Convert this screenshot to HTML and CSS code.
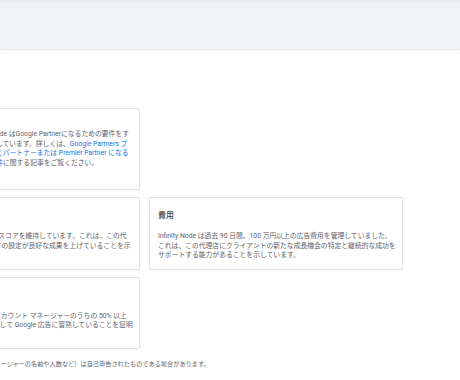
FILE: index.html
```html
<!DOCTYPE html>
<html lang="ja">
<head>
    <meta charset="UTF-8">
    <title>Infinity Node</title>
    <link rel="stylesheet" href="styles.css">
</head>
<body>
<div class="topbar"></div>
<div class="main">
    <div class="cards">
        <div class="card card-badge">
            <div class="badge">
                <svg width="64" height="64" viewBox="0 0 64 64"><circle cx="32" cy="32" r="28" fill="#fff" stroke="#dadce0" stroke-width="2"/></svg>
            </div>
            <p class="desc">Infinity Node はGoogle Partnerになるための要件をす<br>べて満たしています。詳しくは、<a href="#">Google Partners プ<br>ログラムとパートナーまたは Premier Partner になる<br>ための要件</a>に関する記事をご覧ください。</p>
        </div>
        <div class="empty"></div>

        <div class="card">
            <h3 class="title">最適化スコア</h3>
            <p class="desc">Infinity Node は 70% 以上の最適化スコアを維持しています。これは、この代<br>理店の Google 広告運用アカウントの設定が良好な成果を上げていることを示<br>しています。</p>
        </div>
        <div class="card">
            <h3 class="title">費用</h3>
            <p class="desc">Infinity Node は過去 90 日間、100 万円以上の広告費用を管理していました。<br>これは、この代理店にクライアントの新たな成長機会の特定と継続的な成功を<br>サポートする能力があることを示しています。</p>
        </div>

        <div class="card">
            <h3 class="title">認定資格</h3>
            <p class="desc">Infinity Nodeでは、所属しているアカウント マネージャーのうちの 50% 以上<br>が、Google 広告の認定資格を取得して Google 広告に習熟していることを証明<br>しています。</p>
        </div>
        <div class="empty"></div>
    </div>
    <p class="note">※ 代理店に関する情報（アカウント マネージャーの名前や人数など）は自己申告されたものである場合があります。</p>
</div>
</body>
</html>
```

FILE: styles.css
```css
html, body {
    margin: 0;
    padding: 0;
    background: #fff;
    overflow: hidden;
}

body {
    font-family: Roboto, "Noto Sans CJK JP", sans-serif;
    color: #5f6368;
}

.topbar {
    height: 49px;
    background: #f1f3f4;
    border-bottom: 1px solid #e8eaed;
    box-shadow: inset 0 4px 3px -2px rgba(0, 0, 0, 0.04), 0 4px 8px rgba(0, 0, 0, 0.012);
}

.main {
    margin-left: -114px;
    padding-top: 58px;
}

.cards {
    display: grid;
    grid-template-columns: 254px 254px;
    column-gap: 9px;
    row-gap: 7px;
}

.card {
    background: #fff;
    border: 1px solid #e3e3e3;
    border-radius: 2px;
    box-shadow: 0 1px 2px rgba(0, 0, 0, 0.04);
    padding: 12px 8px 8px;
}

.card-badge {
    display: flex;
    align-items: center;
    gap: 10px;
    padding: 8px;
}

.badge {
    width: 64px;
    height: 64px;
    flex: none;
}

.title {
    margin: 0 0 10px;
    font-size: 8px;
    line-height: 12px;
    font-weight: 500;
    color: #3c4043;
}

.desc {
    margin: 0;
    font-size: 6.8px;
    line-height: 9.5px;
    white-space: nowrap;
}

.desc a {
    color: #1a73e8;
    text-decoration: none;
}

.note {
    margin: 10px 0 0;
    font-size: 6.2px;
    line-height: 10px;
    white-space: nowrap;
}
```
